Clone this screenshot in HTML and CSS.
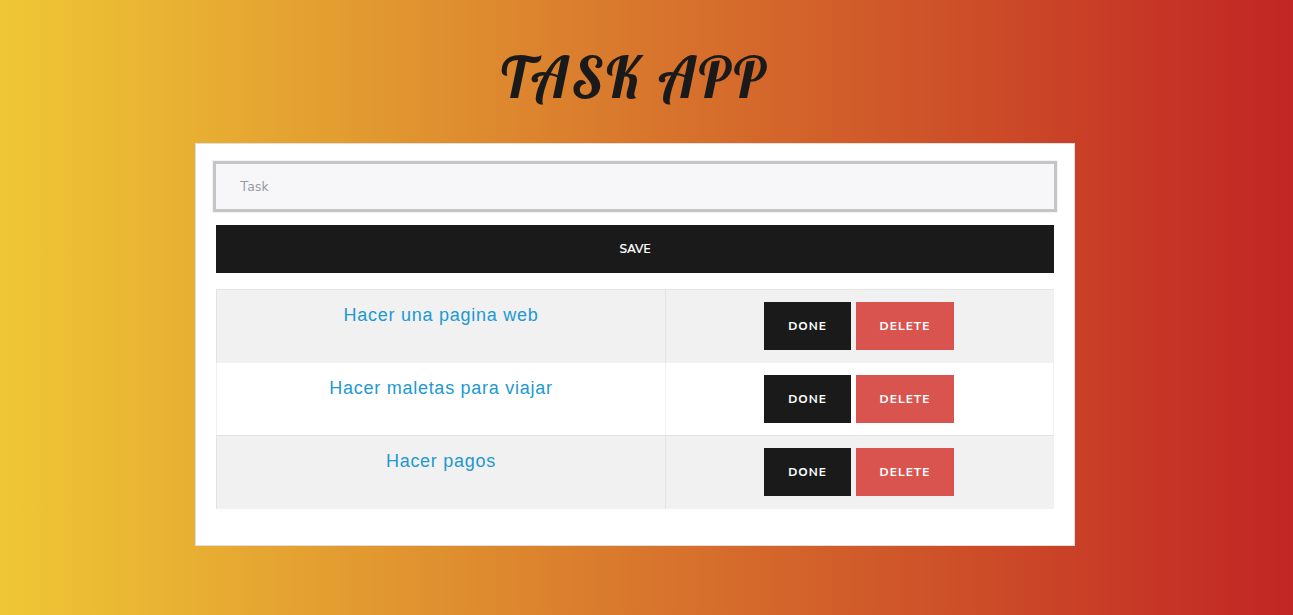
FILE: index.html
```html
<!DOCTYPE html>
<html lang="en">
<head>
<meta charset="utf-8">
<title>Task App</title>
<link rel="stylesheet" href="styles.css">
</head>
<body>
<main class="app">
  <h1 class="title">TASK APP</h1>
  <section class="card">
    <form class="form">
      <input class="field" type="text" placeholder="Task">
      <button class="btn save" type="button">SAVE</button>
    </form>
    <div class="tasks">
      <div class="row striped">
        <div class="name">Hacer una pagina web</div>
        <div class="actions"><button class="btn done">DONE</button><button class="btn delete">DELETE</button></div>
      </div>
      <div class="row">
        <div class="name">Hacer maletas para viajar</div>
        <div class="actions"><button class="btn done">DONE</button><button class="btn delete">DELETE</button></div>
      </div>
      <div class="row striped">
        <div class="name">Hacer pagos</div>
        <div class="actions"><button class="btn done">DONE</button><button class="btn delete">DELETE</button></div>
      </div>
    </div>
  </section>
</main>
</body>
</html>
```
FILE: styles.css
```css
* { box-sizing: border-box; }
body {
  margin: 0;
  height: 615px;
  overflow: hidden;
  background: linear-gradient(to right, #efc735, #c12524);
  font-family: "Nunito Sans", Nunito, Lato, sans-serif;
}
.app { width: 880px; margin-left: 195px; padding-top: 40px; }
.title {
  height: 103px;
  margin: 0;
  font: 400 56px/75px Lobster, "Liberation Serif", serif;
  letter-spacing: 3px;
  text-align: center;
  color: #1a1a1a;
}
.card {
  height: 403px;
  padding: 20px;
  background: #fff;
  border: 1px solid #dfdfdf;
}
.form { display: flex; flex-direction: column; gap: 16px; }
.field {
  height: 45px;
  padding: 0 24px 1px;
  border: 0;
  outline: 0;
  border-radius: 0;
  background: #f7f7f9;
  box-shadow: 0 0 0 3px #c5c5c5, 0 0 0 4px #f3f3f3;
  font: 14px "Nunito Sans", Nunito, Lato, sans-serif;
  color: #1a1a1a;
}
.field::placeholder { color: #919aa1; opacity: 1; }
.btn {
  height: 48px;
  padding: 0;
  border: 0;
  background: #1a1a1a;
  color: #fff;
  font: 700 12px "Nunito Sans", Nunito, Lato, sans-serif;
  letter-spacing: 1px;
}
.save { font-weight: 600; letter-spacing: 0; -webkit-text-stroke: .2px #fff; }
.tasks { margin-top: 16px; }
.row {
  display: grid;
  grid-template-columns: 449px 389px;
  height: 72px;
  border-right: 1px solid #f1f1f1;
}
.striped { height: 74px; border-top: 1px solid #e3e3e3; background: #f1f1f1; }
.name, .actions { padding-top: 12px; border-left: 1px solid #f1f1f1; }
.striped .name, .striped .actions { border-color: #e3e3e3; }
.name {
  text-align: center;
  font: 18px/26px "Liberation Sans", Arial, sans-serif;
  letter-spacing: .74px;
  color: #2199d0;
}
.actions { display: flex; justify-content: center; gap: 5px; padding-right: 2px; }
.done { width: 87px; }
.delete { width: 98px; background: #d9534f; }
```
